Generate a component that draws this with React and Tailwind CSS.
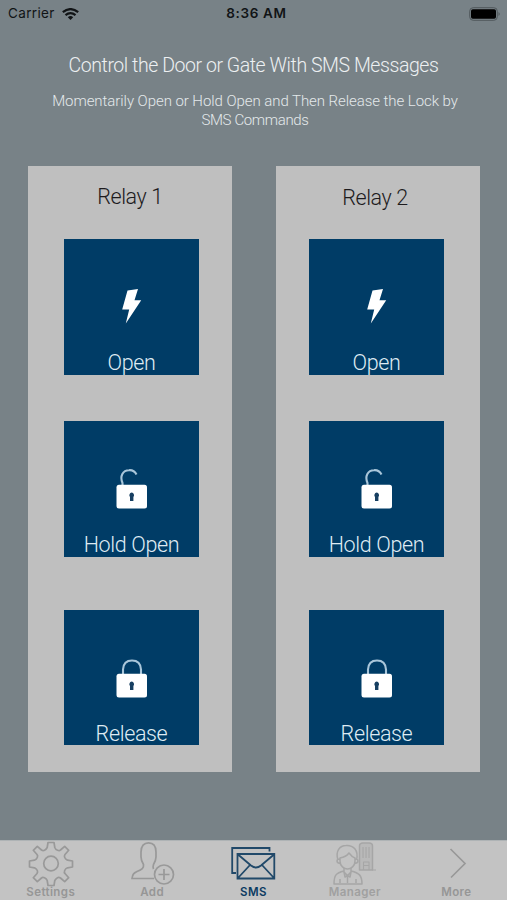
const display = "font-['Roboto',sans-serif] font-light whitespace-nowrap";

function Bolt() {
  return (
    <svg className="block h-[36px] w-[32px]" viewBox="0 0 32 36">
      <path d="M11.500 1.500 22 0 18.500 11.200H25.200L9.800 34.500 13.200 20.500H6.200Z" fill="#fff" />
    </svg>
  );
}

function Lock({ open }) {
  return (
    <svg className="block h-[40px] w-[32px]" viewBox="0 0 32 40">
      <path
        d={open ? "M6.500 17V14C3.500 7 7 1.200 13 1.200Q18 .8 20.500 5.500" : "M7 17V11.500Q7.500 2.500 16 2.500Q24.500 2.500 25 11.500V17"}
        fill="none"
        stroke="#a9c6da"
        strokeWidth="2.100"
      />
      <rect x=".5" y="15.800" width="30.500" height="23.700" rx="2.500" fill="#fff" />
      <path d="M15.700 23.500a2.500 2.700 0 0 1 1.700 4.500v4h-3.400v-4A2.500 2.700 0 0 1 15.700 23.500Z" fill="#173f61" />
    </svg>
  );
}

function Tile({ icon, label, top, iconTop, height }) {
  return (
    <div className={`flex w-[135px] flex-col items-center bg-[#003c66] ${top} ${height}`}>
      <div className={`h-[111px] shrink-0 ${iconTop}`}>{icon}</div>
      <div className={`${display} text-[21.5px] leading-[25px] tracking-[-0.35px] text-[#dfebf3]`}>{label}</div>
    </div>
  );
}

function Panel({ title, pad, titleTop }) {
  return (
    <div className={`flex h-[606px] w-[204px] flex-col bg-[#bfbfbf] ${pad}`}>
      <div className={`h-[73px] w-[135px] shrink-0 ${titleTop}`}>
        <div className={`${display} pr-[3px] text-center text-[21.5px] leading-[26px] tracking-[-0.4px] text-[#1d1b1d]`}>{title}</div>
      </div>
      <Tile icon={<Bolt />} label="Open" top="mt-0" height="h-[136px]" iconTop="pt-[50px]" />
      <Tile icon={<Lock open />} label="Hold Open" top="mt-[46px]" height="h-[136px]" iconTop="pt-[48px]" />
      <Tile icon={<Lock />} label="Release" top="mt-[53px]" height="h-[135px]" iconTop="pt-[48px]" />
    </div>
  );
}

function Gear() {
  return (
    <svg className="block h-[46px] w-[46px]" viewBox="0 0 46 46" fill="none" stroke="#999" strokeWidth="1.700" strokeLinejoin="round">
      <path d="M20 1.500h6l.8 5Q27.500 8.500 29.500 9.300T32.500 9L36.700 5.300 40.700 9.300 37 13.500Q36 15 36.700 16.500T39.500 19.200L44.500 20v6l-5 .8Q37.500 27.500 36.700 29.500T37 32.500L40.700 36.700 36.700 40.700 32.500 37Q31 36 29.500 36.700T26.800 39.500L26 44.500H20L19.200 39.500Q18.500 37.500 16.500 36.700T13.500 37L9.300 40.700 5.300 36.700 9 32.500Q10 31 9.300 29.500T6.500 26.800L1.500 26V20L6.500 19.200Q8.500 18.500 9.300 16.500T9 13.500L5.300 9.300 9.300 5.300 13.500 9Q15 10 16.500 9.300T19.200 6.500Z" />
      <circle cx="23" cy="22.500" r="7.300" />
    </svg>
  );
}

function AddUser() {
  return (
    <svg className="block h-[46px] w-[46px]" viewBox="0 0 46 46" fill="none" stroke="#999" strokeWidth="1.700">
      <path d="M25 37.500H3C3.500 33 5 32 8 30.500 13 28.500 15 27 14.500 23.500 13 21 12 19 12 16V11C12 5 15 1.800 19.500 1.800S27 5 27 11V16C27 19 26 21 24.500 23.500 24 25 24 27 24.500 28" />
      <circle cx="35" cy="33.500" r="9.500" />
      <path d="M35 28v11M29.500 33.500h11" />
    </svg>
  );
}

function Mail() {
  return (
    <svg className="block h-[46px] w-[46px]" viewBox="0 0 46 46" fill="none" stroke="#214969" strokeWidth="1.800">
      <path d="M6 32H2.200V7H39.500V10.500" />
      <path d="M7.500 13H44.300V37.500H7.500ZM8 13.500 21 24.500Q26 28.500 31 24.500L44 13.500M8 37 20 24M44 37 32 24" />
    </svg>
  );
}

function Manager() {
  return (
    <svg className="block h-[46px] w-[46px]" viewBox="0 0 46 46" fill="none" stroke="#a6a6a6" strokeWidth="1.500" strokeLinejoin="round">
      <path d="M6 19C3 10 8 4.500 14 4.500 21 4 27 9 24.500 19M8 17Q14 16 17 12 20 16 23 17V20C23 25 19 28 15.500 28S8 25 8 20ZM7.500 18Q5 18 5 20T8 22.500M23.500 18Q26 18 26 20T23 22.500" />
      <path d="M12 27V31L15.500 34.500 19 31V27M12 30C4 32 2 34 2 43H30C30 34 27 32 19 30M12 31 13 36 15.500 34.500 18 36 19 31M15.500 34.500V42M8 38V42M24 38V42" />
      <path d="M27.500 29V5Q27.500 2 31 2H37Q40.500 2 40.500 5V29Z" fill="#b9b9b9" />
      <path d="M40 29H44M31 6V17M34 6V17M37 6V17M31.500 29V21H37V29M31.500 24.500H37" strokeWidth="1.100" />
    </svg>
  );
}

function Chevron() {
  return (
    <svg className="block h-[46px] w-[46px]" viewBox="0 0 46 46" fill="none" stroke="#999" strokeWidth="1.700">
      <path d="M17.500 8 32 22.500 18 36.500" />
    </svg>
  );
}

const tabs = [
  { label: "Settings", icon: <Gear />, tone: "text-[#969696]" },
  { label: "Add", icon: <AddUser />, tone: "text-[#969696]" },
  { label: "SMS", icon: <Mail />, tone: "text-[#0d3c62]" },
  { label: "Manager", icon: <Manager />, tone: "text-[#a0a0a0]" },
  { label: "More", icon: <Chevron />, tone: "text-[#969696]" },
];

export default function App() {
  return (
    <div className="flex h-[900px] w-[507px] flex-col overflow-hidden bg-[#788287] font-['Inter',sans-serif]">
      <header className="grid h-[27px] shrink-0 grid-cols-3 items-center px-2 text-[13px] text-[#111416]">
        <div className="flex items-center gap-[7px]">
          <span className="text-[13.5px] tracking-[0.35px]">Carrier</span>
          <svg className="h-[12px] w-[17px]" viewBox="0 0 17 12" fill="none" stroke="#111416" strokeWidth="2.200">
            <path d="M.8 4.200Q8.500-2 16.200 4.200M3.500 7.200Q8.500 3 13.500 7.200" />
            <path d="M5.800 9.200Q8.500 7 11.200 9.200L8.500 12Z" fill="#111416" stroke="none" />
          </svg>
        </div>
        <div className="pl-[6px] text-center text-[13.5px] font-semibold tracking-[0.65px] whitespace-nowrap">8:36 AM</div>
        <svg className="h-[14px] w-[32px] justify-self-end translate-x-[2px]" viewBox="0 0 32 14">
          <rect x=".7" y=".7" width="27.600" height="12.600" rx="3.500" fill="none" stroke="#50585c" />
          <rect x="2" y="2.300" width="25" height="9.400" rx="1.800" fill="#000" />
          <path d="M29.500 5Q32 7 29.500 9Z" fill="#50585c" />
        </svg>
      </header>
      <div className={`${display} mt-[27px] text-center text-[19.5px] leading-6 tracking-[-0.44px] text-[#edf0f2]`}>
        Control the Door or Gate With SMS Messages
      </div>
      <div className={`${display} mt-[14px] pl-[3px] text-center text-[15px] leading-[19px] tracking-[-0.06px] text-[#e4e9eb]`}>
        Momentarily Open or Hold Open and Then Release the Lock by
        <br />
        <span className="tracking-[-0.35px]">SMS Commands</span>
      </div>
      <main className="mt-[36px] flex flex-1 gap-[44px] pl-[28px]">
        <Panel title="Relay 1" pad="pl-[36px]" titleTop="pt-[18px]" />
        <Panel title="Relay 2" pad="pl-[33px]" titleTop="pt-[19px]" />
      </main>
      <nav className="grid h-[60px] shrink-0 grid-cols-5 border-t border-[#aeb3b5] bg-[#c3c3c3]">
        {tabs.map((tab) => (
          <div key={tab.label} className={`flex flex-col items-center ${tab.tone}`}>
            {tab.icon}
            <span className="-mt-px text-[11.5px] leading-[12px] font-semibold tracking-[0.4px]">{tab.label}</span>
          </div>
        ))}
      </nav>
    </div>
  );
}
